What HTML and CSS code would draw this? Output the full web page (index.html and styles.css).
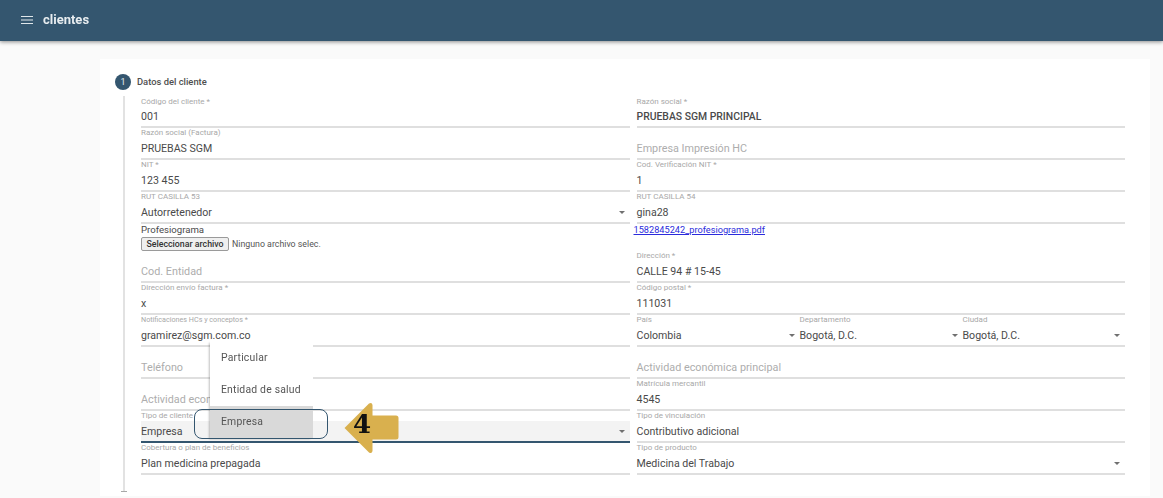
FILE: index.html
```html
<!DOCTYPE html>
<html lang="es">
<head>
<meta charset="utf-8">
<title>clientes</title>
<link rel="stylesheet" href="styles.css">
</head>
<body>
<div class="soft">
<header class="appbar">
  <svg class="menu-icon" viewBox="0 0 14 10" width="14" height="10" aria-hidden="true"><path d="M1 1.5h12M1 5h12M1 8.5h12" stroke="#dfe6ea" stroke-width="1.2" fill="none"/></svg>
  <span class="appbar-title">clientes</span>
</header>
<main class="page">
  <section class="card">
    <div class="step-head"><span class="step-num">1</span><span class="step-title">Datos del cliente</span></div>
    <div class="step-body">
      <div class="field first"><label>Código del cliente *</label><div class="control"><span>001</span></div></div>
      <div class="field first"><label>Razón social *</label><div class="control"><span class="strong">PRUEBAS SGM PRINCIPAL</span></div></div>

      <div class="field"><label>Razón social (Factura)</label><div class="control"><span>PRUEBAS SGM</span></div></div>
      <div class="field"><label>&nbsp;</label><div class="control"><span class="ph">Empresa Impresión HC</span></div></div>

      <div class="field"><label>NIT *</label><div class="control"><span>123 455</span></div></div>
      <div class="field"><label>Cod. Verificación NIT *</label><div class="control"><span>1</span></div></div>

      <div class="field"><label>RUT CASILLA 53</label><div class="control"><span>Autorretenedor</span><i class="caret"></i></div></div>
      <div class="field"><label>RUT CASILLA 54</label><div class="control"><span>gina28</span></div></div>

      <div class="file-cell">
        <div class="file-label">Profesiograma</div>
        <div class="file-row"><span class="file-btn">Seleccionar archivo</span><span class="file-name">Ninguno archivo selec.</span></div>
      </div>
      <div class="file-cell"><a class="file-link" href="#">1582845242_profesiograma.pdf</a></div>

      <div class="field"><label>&nbsp;</label><div class="control"><span class="ph">Cod. Entidad</span></div></div>
      <div class="field"><label>Dirección *</label><div class="control"><span>CALLE 94 # 15-45</span></div></div>

      <div class="field"><label>Dirección envío factura *</label><div class="control"><span>x</span></div></div>
      <div class="field"><label>Código postal *</label><div class="control"><span>111031</span></div></div>

      <div class="field"><label class="tight">Notificaciones HCs y conceptos *</label><div class="control"><span>gramirez@sgm.com.co</span></div></div>
      <div class="triple">
        <div class="field"><label>País</label><div class="control"><span>Colombia</span><i class="caret"></i></div></div>
        <div class="field"><label>Departamento</label><div class="control"><span>Bogotá, D.C.</span><i class="caret"></i></div></div>
        <div class="field"><label>Ciudad</label><div class="control"><span>Bogotá, D.C.</span><i class="caret"></i></div></div>
      </div>

      <div class="field"><label>&nbsp;</label><div class="control"><span class="ph">Teléfono</span></div></div>
      <div class="field"><label>&nbsp;</label><div class="control"><span class="ph">Actividad económica principal</span></div></div>

      <div class="field"><label>&nbsp;</label><div class="control"><span class="ph">Actividad econ</span></div></div>
      <div class="field"><label>Matrícula mercantil</label><div class="control"><span>4545</span></div></div>

      <div class="field"><label>Tipo de cliente</label><div class="control active"><span>Empresa</span><i class="caret"></i></div></div>
      <div class="field"><label>Tipo de vinculación</label><div class="control"><span>Contributivo adicional</span></div></div>

      <div class="field"><label>Cobertura o plan de beneficios</label><div class="control"><span>Plan medicina prepagada</span></div></div>
      <div class="field"><label>Tipo de producto</label><div class="control"><span>Medicina del Trabajo</span><i class="caret"></i></div></div>
    </div>
    <div class="next-step"></div>
  </section>
</main>
</div>
<ul class="menu">
  <li>Particular</li>
  <li>Entidad de salud</li>
  <li class="selected">Empresa</li>
</ul>
<div class="callout"></div>
<div class="arrow">
  <svg viewBox="0 0 56 52" width="56" height="52" aria-hidden="true"><path d="M1.5 26 L26 1.5 Q29 0 29.5 3 L29.5 13.5 L53 13.5 Q55.5 13.5 55.5 16 L55.5 35 Q55.5 37.5 53 37.5 L29.5 37.5 L29.5 49 Q29 52 26 50.5 Z" fill="#d9b04e"/></svg>
  <span class="arrow-num">4</span>
</div>
</body>
</html>
```
FILE: styles.css
```css
* { box-sizing: border-box; }
html, body { margin: 0; height: 498px; overflow: hidden; }
body { position: relative; background: #fafafa; font-family: Roboto, "Liberation Sans", sans-serif; color: #4a4a4a; }
.soft { filter: blur(0.45px); }

.appbar { height: 41px; background: #34566f; display: flex; align-items: center; padding: 0 0 2px 20px; gap: 9px; box-shadow: 0 1px 4px rgba(0,0,0,.45); position: relative; }
.appbar-title { color: #e8edf0; font-size: 13px; font-weight: 700; }

.page { padding: 18px 13px 0 100px; }
.card { background: #fff; height: 437px; padding: 15px 25px 0 15px; overflow: hidden; }
.step-head { height: 22px; display: flex; align-items: flex-start; gap: 6px; }
.step-num { width: 16px; height: 16px; border-radius: 50%; background: #34566f; color: #e8edf0; font-size: 9px; display: flex; align-items: center; justify-content: center; }
.step-title { font-size: 9.4px; font-weight: 500; color: #4f4f4f; line-height: 16px; }

.step-body { margin-left: 8px; border-left: 2px solid #e2e2e2; padding: 0 0 16px 16px; display: grid; grid-template-columns: 1fr 1fr; column-gap: 7px; grid-template-rows: repeat(4, 32px) 27px repeat(7, 32px); }
.next-step { width: 6px; height: 1px; background: #a8a8a8; margin: 0 0 0 6px; }

.field { min-width: 0; }
.field label { display: block; height: 10px; font-size: 8px; line-height: 10px; color: #a8a8a8; white-space: nowrap; }
.field label.tight { font-size: 7.2px; }
.field.first label { line-height: 12px; }
.control { height: 22px; border-bottom: 2px solid #dfdfdf; display: flex; align-items: center; justify-content: space-between; font-size: 10.6px; padding: 1px 5px 0 0; color: #4a4a4a; }
.control span { white-space: nowrap; }
.control .strong { font-weight: 500; font-size: 10.4px; }
.control .ph { color: #adadad; font-size: 10.8px; }
.control.active { background: #f3f3f3; border-bottom-color: #34566f; }
.caret { width: 0; height: 0; border-left: 3px solid transparent; border-right: 3px solid transparent; border-top: 3px solid #707070; }

.triple { display: grid; grid-template-columns: 163px 163px 1fr; }
.triple .field { min-width: 0; }

.file-cell { min-width: 0; }
.file-label { font-size: 9.6px; line-height: 12px; color: #4a4a4a; }
.file-row { display: flex; align-items: center; gap: 3px; margin-top: 1px; }
.file-btn { width: 88px; height: 14px; border: 1px solid #9a9a9a; border-radius: 2px; background: #efefef; font-size: 8.8px; font-weight: 500; line-height: 12px; text-align: center; color: #333; white-space: nowrap; }
.file-name { font-size: 8.8px; color: #555; }
.file-link { display: block; margin-left: -3px; font-size: 9.2px; line-height: 12px; color: #2b2bdc; text-decoration: underline; }

.menu { position: absolute; left: 210px; top: 340px; width: 103px; margin: 0; padding: 2px 0 0; list-style: none; background: #fff; box-shadow: -2px 2px 2px -1px rgba(0,0,0,.25); filter: blur(0.3px); }
.menu li { height: 32px; padding-left: 11px; font-size: 10.4px; line-height: 32px; letter-spacing: .2px; color: #555; }
.menu li.selected { background: #d9d9d9; }

.callout { position: absolute; left: 194px; top: 409px; width: 134px; height: 30px; border: 1px solid #34566f; border-radius: 8px; }

.arrow { position: absolute; left: 343px; top: 402px; width: 56px; height: 52px; }
.arrow svg { display: block; }
.arrow-num { position: absolute; left: 10px; top: 5px; font-family: "DejaVu Serif", "Liberation Serif", serif; font-weight: 700; font-size: 26px; line-height: 34px; color: #111; }
```
